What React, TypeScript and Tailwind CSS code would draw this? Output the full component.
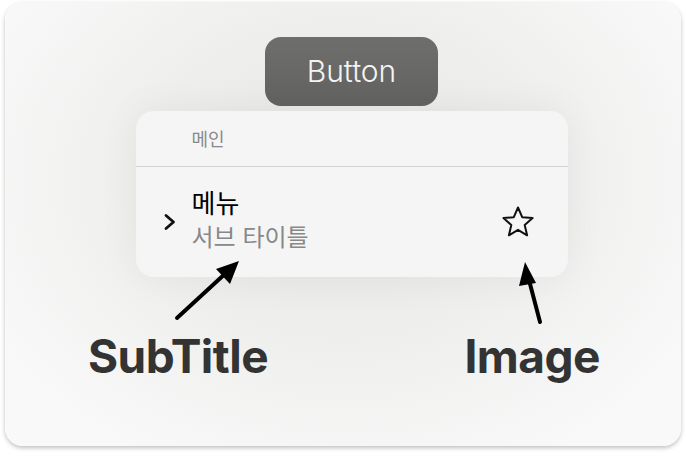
const kr = { fontFamily: 'Inter, "Noto Sans CJK KR", sans-serif' };

const App = () => {
  return (
    <div className="w-[686px] h-[456px] bg-white pt-[2px] pl-[5px]" style={kr}>
      {/* outer card */}
      <div className="relative w-[676px] h-[444px] pl-[17px] rounded-[18px] bg-[radial-gradient(ellipse_at_50%_40%,#e6e6e5_0%,#efefee_45%,#f9f9f9_85%)] shadow-[0_2px_4px_rgba(0,0,0,0.25)] flex flex-col items-center">
        <button className="mt-[35px] w-[173px] h-[69px] rounded-[16px] bg-[linear-gradient(#6e6e6c,#626260)] text-[30px] text-[#f4f4f4] font-light">
          Button
        </button>

        {/* menu */}
        <div className="mt-[5px] w-[432px] h-[166px] rounded-[18px] bg-[#f5f5f5] shadow-[0_0_40px_rgba(0,0,0,0.06)] flex flex-col">
          <div className="h-[56px] pl-[56px] pt-[2px] flex items-center border-b border-[#d3d3d3] text-[18px] text-[#8a8a8a]">
            메인
          </div>
          <div className="flex-1 flex items-center pl-[27px] pr-[32px]">
            <svg width="14" height="20" viewBox="0 0 14 20" className="mr-[15px]">
              <path d="M3 3.5 L10.5 10 L3 16.5" fill="none" stroke="#111" strokeWidth="2.8" strokeLinecap="round" strokeLinejoin="round" />
            </svg>
            <div className="flex flex-col mb-[2px]">
              <span className="text-[26px] leading-[34px] text-black">메뉴</span>
              <span className="text-[24px] leading-[34px] text-[#888888]">서브 타이틀</span>
            </div>
            <svg width="36" height="36" viewBox="0 0 36 36" className="ml-auto">
              <path
                d="M18 3.5 L22.2 13.2 L32.6 14.1 L24.7 21 L27.1 31.3 L18 25.8 L8.9 31.3 L11.3 21 L3.4 14.1 L13.8 13.2 Z"
                fill="none"
                stroke="#111"
                strokeWidth="2"
                strokeLinejoin="round"
              />
            </svg>
          </div>
        </div>

        {/* labels */}
        <div className="w-full flex justify-between pl-[66px] pr-[81px] mt-[56px] text-[46px] font-bold text-[#333333] leading-none tracking-[-0.5px]">
          <span>SubTitle</span>
          <span>Image</span>
        </div>

        {/* arrows */}
        <svg className="absolute left-0 top-0 pointer-events-none" width="676" height="444" viewBox="0 0 676 444">
          <line x1="172" y1="316" x2="222" y2="270" stroke="#000" strokeWidth="4" strokeLinecap="round" />
          <polygon points="234,259 225,282 211,267" fill="#000" />
          <line x1="535" y1="320" x2="524" y2="278" stroke="#000" strokeWidth="4" strokeLinecap="round" />
          <polygon points="520,260 531,281 514,284" fill="#000" />
        </svg>
      </div>
    </div>
  );
};

export default App;
